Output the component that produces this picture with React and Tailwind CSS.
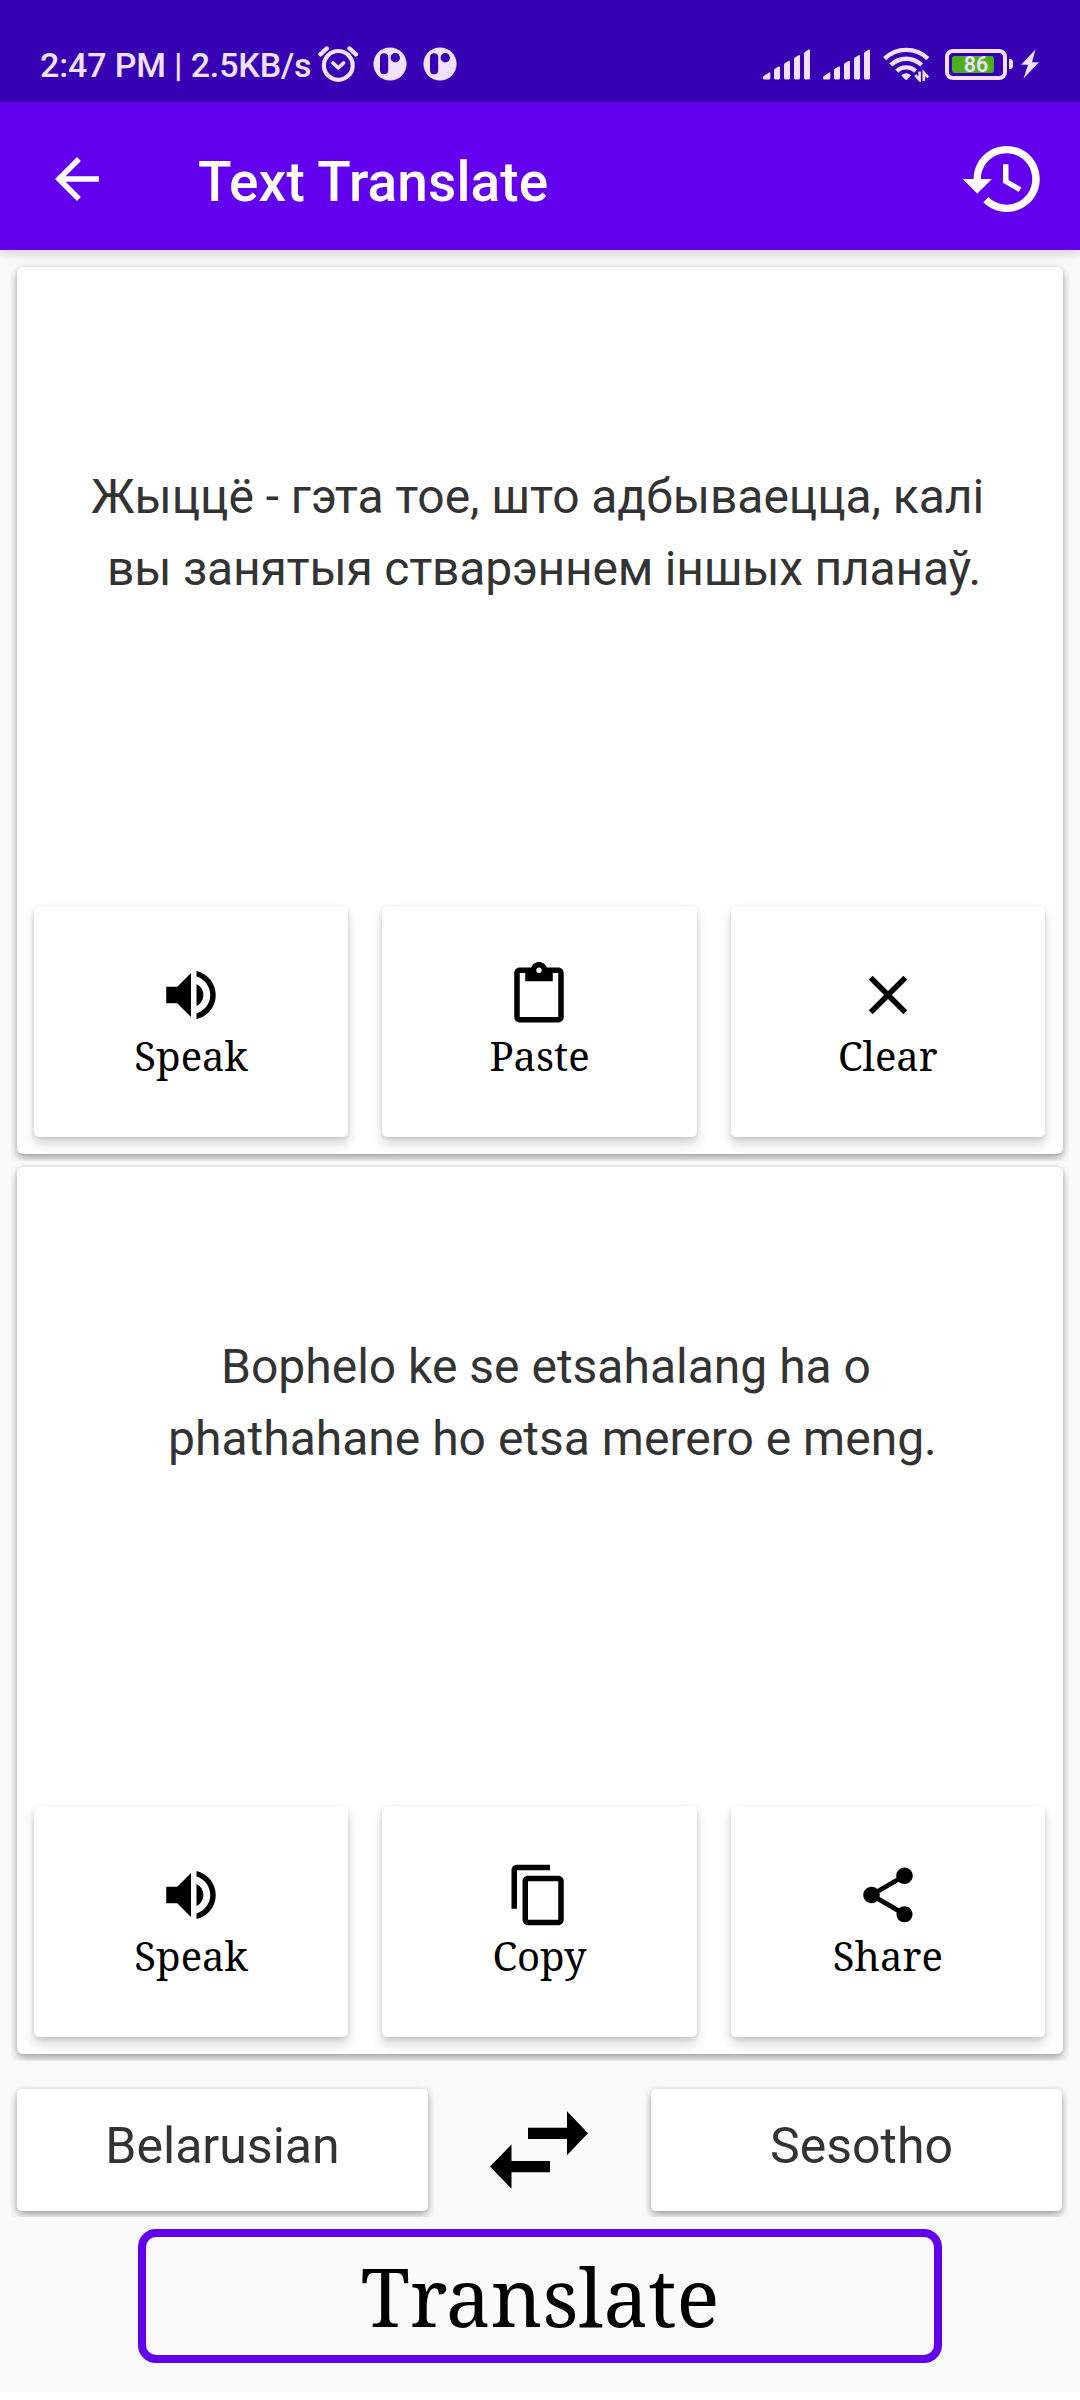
import {
  MdArrowBack,
  MdClear,
  MdContentCopy,
  MdContentPaste,
  MdShare,
  MdVolumeUp,
} from "react-icons/md";

const sourceActions = [
  { label: "Speak", icon: MdVolumeUp },
  { label: "Paste", icon: MdContentPaste },
  { label: "Clear", icon: MdClear },
];

const resultActions = [
  { label: "Speak", icon: MdVolumeUp },
  { label: "Copy", icon: MdContentCopy },
  { label: "Share", icon: MdShare },
];

const AlarmIcon = () => (
  <svg width="40" height="38" viewBox="0 0 40 38" fill="none" stroke="currentColor">
    <circle cx="20.3" cy="20.4" r="14.4" strokeWidth="4.2" />
    <path d="M2.4 9.4 8.8 3.4M38 9.4l-6.600-6" strokeWidth="4.2" strokeLinecap="round" />
    <path d="m15 18 5.300 4.800 5.300-4.800" strokeWidth="3.6" strokeLinecap="round" strokeLinejoin="round" />
  </svg>
);

const AppBadgeIcon = () => (
  <svg width="34" height="34" viewBox="0 0 34 34">
    <circle cx="17" cy="17" r="16.6" fill="currentColor" />
    <rect x="7" y="6.3" width="8.2" height="21" rx="4.1" fill="#3700b3" />
    <circle cx="22.3" cy="10.8" r="4.7" fill="#3700b3" />
  </svg>
);

const SignalIcon = () => (
  <svg width="48" height="32" viewBox="0 0 48 32" fill="currentColor">
    <path d="M0 29.5a2 2 0 0 1 .8-1.6L6 24.4q1.3-.6 1.3.8V30q0 1.5-1.5 1.5H1.5Q0 31.5 0 30z" />
    <path d="M11 22.3q0-1 .9-1.6l3.7-2.1q1.4-.6 1.4.8V30q0 1.5-1.5 1.5h-3Q11 31.5 11 30z" />
    <path d="M21 16.7q0-1 .9-1.6l3.7-2.1q1.4-.6 1.4.8V30q0 1.5-1.5 1.5h-3Q21 31.5 21 30z" />
    <path d="M31 11q0-1 .9-1.6l3.7-2.1q1.4-.6 1.4.8V30q0 1.5-1.5 1.5h-3Q31 31.5 31 30z" />
    <path d="M41 5.500q0-1 .9-1.6l3.7-2.3q1.4-.6 1.4.8V30q0 1.5-1.5 1.5h-3Q41 31.5 41 30z" />
  </svg>
);

const WifiIcon = () => (
  <svg width="47" height="36" viewBox="0 0 47 36" fill="none" stroke="currentColor">
    <path d="M1.6 12.6a31 31 0 0 1 43.2 0" strokeWidth="4.4" />
    <path d="M7.8 19a22 22 0 0 1 30.8 0" strokeWidth="4.4" />
    <path d="M13.8 25.2a13.5 13.5 0 0 1 18.8 0" strokeWidth="4.4" />
    <path d="M18.2 29.3q5-4.2 10 0l-3.6 4q-1.4 1.2-2.8 0z" fill="currentColor" stroke="none" />
    <path d="M36.6 25.5V34l-4.4-4.8M40.8 35v-8.5l4.4 4.8" strokeWidth="2.6" />
  </svg>
);

const BoltIcon = () => (
  <svg width="20" height="30" viewBox="0 0 20 30" fill="currentColor">
    <path d="M15.5.5 1 15.8h7L3.5 29.5 19 13.2h-7z" />
  </svg>
);

const HistoryIcon = () => (
  <svg width="96" height="96" viewBox="0 0 24 24" fill="currentColor">
    <path d="M11.9 3.75c-4.55 0-8.23 3.7-8.23 8.25H.92l3.57 3.57.04.13 3.7-3.7H5.5c0-3.54 2.87-6.42 6.42-6.42 3.54 0 6.4 2.88 6.4 6.42s-2.86 6.42-6.4 6.42c-1.78 0-3.38-.73-4.54-1.9l-1.3 1.3c1.5 1.5 3.55 2.43 5.83 2.43 4.58 0 8.28-3.7 8.28-8.25 0-4.56-3.7-8.25-8.28-8.25zM11 8.33v4.6l3.92 2.3.66-1.1-3.2-1.9v-3.9H11z" />
  </svg>
);

const SwapIcon = () => (
  <svg width="98" height="78" viewBox="0 0 98 78" fill="currentColor">
    <path d="M38 16.8h39V.3l21 22-21 22V28H38z" />
    <path d="M60 61.3H21.500v16.4L0 55.5l21.500-22V50H60z" />
  </svg>
);

const StatusBar = () => (
  <div className="h-[102px] bg-[#3700b3] text-[#f0e2ff] flex items-center justify-between pl-10 pr-10 pt-[26px]">
    <div className="flex items-center">
      <span className="mt-[2px] text-[34px] leading-[40px] font-medium tracking-[-0.15px] w-[278px] whitespace-nowrap">
        2:47 PM | 2.5KB/s
      </span>
      <AlarmIcon />
      <div className="flex gap-4 ml-[15px]">
        <AppBadgeIcon />
        <AppBadgeIcon />
      </div>
    </div>

    <div className="flex items-center">
      <div className="flex gap-3 mr-3">
        <SignalIcon />
        <SignalIcon />
      </div>
      <WifiIcon />
      <div className="relative w-[62px] h-[31px] ml-[15px] border-4 border-[#f0e2ff] rounded-[8px] p-[3px]">
        <div className="w-[42px] h-[17px] rounded-[3px] bg-[#4caf1e]" />
        <span className="absolute inset-0 flex items-center justify-center text-[21.5px] font-semibold leading-none pt-[2px]">
          86
        </span>
      </div>
      <div className="w-1 h-[10px] ml-[2px] mr-[7px] rounded-r-[3px] bg-[#f0e2ff]" />
      <BoltIcon />
    </div>
  </div>
);

const AppBar = () => (
  <div className="relative h-[148px] bg-[#6200ee] text-white flex items-center pl-11 pr-[25px] pt-[6px] shadow-[0_2px_12px_rgba(0,0,0,0.2)]">
    <MdArrowBack className="size-[66px]" />
    <h1 className="ml-[88px] mt-[6px] text-[55px] leading-[64px] font-medium tracking-[0.1px] flex-1">
      Text Translate
    </h1>
    <HistoryIcon />
  </div>
);

const ActionButton = ({ label, icon: Icon }) => (
  <button className="flex-1 h-[231px] pt-14 flex flex-col items-center rounded-[5px] bg-white text-black shadow-[0_7px_12px_rgba(0,0,0,0.17),0_1px_4px_rgba(0,0,0,0.12)]">
    <Icon className="size-[66px]" />
    <span className="mt-px font-['Noto_Serif',serif] text-[40px] leading-[54px]">
      {label}
    </span>
  </button>
);

const TextCard = ({ children, actions }) => (
  <section className="h-[900px] px-[6px] pt-[6px] overflow-hidden">
    <div className="h-[887px] pl-[17px] pr-[18px] pb-[17px] flex flex-col justify-between rounded-[6px] bg-white shadow-[0_4px_9px_rgba(0,0,0,0.34),0_0_4px_rgba(0,0,0,0.1)]">
      <div className="text-[48px] leading-[72px] text-[#333333] whitespace-nowrap">
        {children}
      </div>
      <div className="flex gap-[34px]">
        {actions.map((action) => (
          <ActionButton key={action.label} {...action} />
        ))}
      </div>
    </div>
  </section>
);

const LanguageButton = ({ children }) => (
  <div className="w-[423px] h-[134px] p-[6px] overflow-hidden">
    <button className="w-full h-full pb-2 rounded-[5px] bg-white text-[50px] leading-[58px] text-[#333333] shadow-[0_4px_9px_rgba(0,0,0,0.34),0_0_4px_rgba(0,0,0,0.08)]">
      {children}
    </button>
  </div>
);

const App = () => {
  return (
    <div className="w-[1080px] h-[2400px] bg-white font-['Roboto',sans-serif]">
      <div className="h-[2392px] bg-[#fafafa]">
        <StatusBar />
        <AppBar />

        <main className="px-[11px] pt-[11px]">
          <TextCard actions={sourceActions}>
            <p className="pt-[194px] pl-[57px] tracking-[-0.06px]">
              Жыццё - гэта тое, што адбываецца, калі
            </p>
            <p className="pl-[73px] tracking-[-0.22px]">
              вы занятыя стварэннем іншых планаў.
            </p>
          </TextCard>

          <TextCard actions={resultActions}>
            <p className="pt-[164px] pl-[187px]">
              Bophelo ke se etsahalang ha o
            </p>
            <p className="pl-[134px]">phathahane ho etsa merero e meng.</p>
          </TextCard>

          <div className="flex items-center justify-between pt-[22px] pr-px">
            <LanguageButton>Belarusian</LanguageButton>
            <button className="ml-[-1px]">
              <SwapIcon />
            </button>
            <LanguageButton>
              <span className="pl-[10px]">Sesotho</span>
            </LanguageButton>
          </div>

          <button className="block w-[804px] h-[134px] mt-3 ml-[127px] border-8 border-[#6200ee] rounded-[18px] text-black font-['Noto_Serif',serif] text-[80px] leading-[108px]">
            Translate
          </button>
        </main>
      </div>
    </div>
  );
};

export default App;
